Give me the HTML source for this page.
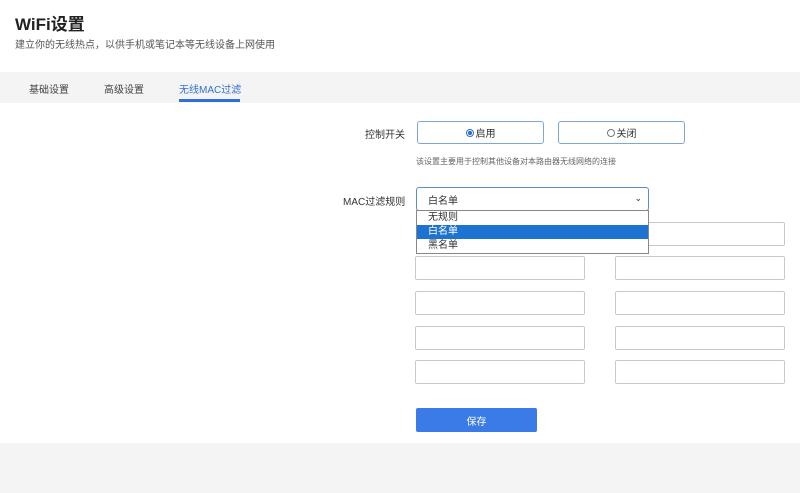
<!DOCTYPE html>
<html><head><meta charset="utf-8"><style>
*{margin:0;padding:0;box-sizing:border-box}
body{width:800px;height:493px;background:#fff;font-family:"Liberation Sans","Noto Sans CJK SC",sans-serif;position:relative;overflow:hidden;color:#333}
.a{position:absolute}
.inp{position:absolute;width:170px;height:24px;border:1px solid #c8c8c8;border-radius:2px;background:#fff}
.c{display:flex;align-items:center;justify-content:center}
</style></head><body>
<div class="a" style="left:15px;top:10px;font-size:17px;font-weight:bold;color:#222">WiFi设置</div>
<div class="a" style="left:15px;top:36px;font-size:10px;color:#555">建立你的无线热点，以供手机或笔记本等无线设备上网使用</div>
<div class="a" style="left:0;top:72px;width:800px;height:31px;background:#f4f4f4"></div>
<div class="a" style="left:29px;top:81px;font-size:10px;color:#444">基础设置</div>
<div class="a" style="left:104px;top:81px;font-size:10px;color:#444">高级设置</div>
<div class="a" style="left:179px;top:81px;font-size:10px;color:#2f6fd6">无线MAC过滤</div>
<div class="a" style="left:179px;top:99px;width:61px;height:3px;background:#2f6fd6"></div>
<div class="a" style="left:365px;top:126px;font-size:10px;color:#333">控制开关</div>
<div class="a c" style="left:417px;top:121px;width:127px;height:23px;border:1px solid #7fa6d8;border-radius:3px;font-size:10px"><span style="display:inline-block;width:8px;height:8px;border-radius:50%;border:1px solid #2f6fd6;background:radial-gradient(#2f6fd6 45%,#fff 55%);margin-right:2px"></span>启用</div>
<div class="a c" style="left:558px;top:121px;width:127px;height:23px;border:1px solid #7fa6d8;border-radius:3px;font-size:10px"><span style="display:inline-block;width:8px;height:8px;border-radius:50%;border:1px solid #777;margin-right:2px"></span>关闭</div>
<div class="a" style="left:416px;top:156px;font-size:8px;color:#666">该设置主要用于控制其他设备对本路由器无线网络的连接</div>
<div class="a" style="left:343px;top:193px;font-size:10px;color:#333">MAC过滤规则</div>
<div class="inp" style="left:615px;top:222px"></div>
<div class="inp" style="left:415px;top:256px"></div><div class="inp" style="left:615px;top:256px"></div>
<div class="inp" style="left:415px;top:291px"></div><div class="inp" style="left:615px;top:291px"></div>
<div class="inp" style="left:415px;top:326px"></div><div class="inp" style="left:615px;top:326px"></div>
<div class="inp" style="left:415px;top:360px"></div><div class="inp" style="left:615px;top:360px"></div>
<div class="a" style="left:416px;top:187px;width:233px;height:24px;border:1px solid #5a8cc8;border-radius:3px;background:#fff;font-size:10px;display:flex;align-items:center;padding-left:11px">白名单<span style="position:absolute;right:6px;top:6px;font-size:9px;line-height:9px">⌄</span></div>
<div class="a" style="left:416px;top:210px;width:233px;height:44px;border:1px solid #888;background:#fff;font-size:10px;line-height:14px">
<div style="padding-left:11px">无规则</div>
<div style="padding-left:11px;background:#1e73d2;color:#fff">白名单</div>
<div style="padding-left:11px">黑名单</div></div>
<div class="a c" style="left:416px;top:408px;width:121px;height:24px;background:#3a7be8;border-radius:2px;color:#fff;font-size:10px">保存</div>
<div class="a" style="left:0;top:443px;width:800px;height:50px;background:#f4f4f4"></div>
</body></html>
